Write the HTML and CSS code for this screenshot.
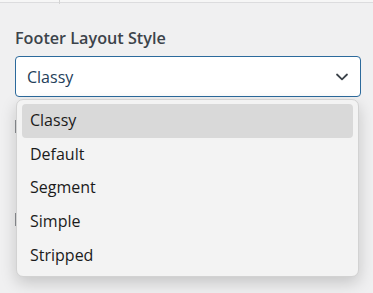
FILE: index.html
```html
<!DOCTYPE html>
<html lang="en">
<head>
    <meta charset="UTF-8">
    <meta name="viewport" content="width=device-width, initial-scale=1.0">
    <title>Footer Layout Style</title>
    <link rel="stylesheet" href="styles.css">
</head>
<body>
    <div class="topbar"><span class="tick"></span></div>
    <div class="panel">
        <label class="label" for="footer-style">Footer Layout Style</label>
        <div class="select-wrap">
            <div class="select" id="footer-style">
                <span class="select-value">Classy</span>
                <svg class="chevron" width="14" height="8" viewBox="0 0 14 8">
                    <path d="M2 1.5 L7 6.3 L12 1.5" fill="none" stroke="#3c434a" stroke-width="1.8" stroke-linecap="round" stroke-linejoin="round"/>
                </svg>
            </div>
            <ul class="options">
                <li class="option active">Classy</li>
                <li class="option">Default</li>
                <li class="option">Segment</li>
                <li class="option">Simple</li>
                <li class="option">Stripped</li>
            </ul>
        </div>
        <div class="field-under"></div>
        <div class="field-under second"></div>
    </div>
</body>
</html>
```

FILE: styles.css
```css
body {
    margin: 0;
    font-family: "Open Sans", "Noto Sans", sans-serif;
    background-color: #f0f0f1;
    height: 293px;
    overflow: hidden;
}
.topbar {
    height: 2px;
    background-color: #f6f6f6;
    border-bottom: 1px solid #dcdcde;
    position: relative;
}
.tick {
    position: absolute;
    left: 59px;
    top: 0;
    width: 1px;
    height: 4px;
    background-color: #d4d4d4;
}
.panel {
    padding: 25px 12px 0 15px;
}
.label {
    display: block;
    font-size: 16.2px;
    font-weight: 600;
    color: #3c434a;
    line-height: 20px;
    margin-bottom: 8px;
}
.select-wrap {
    position: relative;
}
.select {
    height: 39px;
    border: 1px solid #2c6a9c;
    border-radius: 4px;
    background-color: #ffffff;
    display: flex;
    align-items: center;
    justify-content: space-between;
    padding: 0 11px 0 11px;
}
.select-value {
    font-size: 16px;
    color: #24405a;
}
.chevron {
    margin-top: 1px;
}
.options {
    position: absolute;
    top: 43px;
    left: 1px;
    right: 2px;
    margin: 0;
    padding: 4px 5px;
    list-style: none;
    background-color: #f3f3f3;
    border: 1px solid #d2d2d2;
    border-radius: 7px;
    box-shadow: 0 6px 16px rgba(0, 0, 0, 0.18);
    z-index: 2;
}
.option {
    height: 33.7px;
    line-height: 33.7px;
    padding-left: 8px;
    font-size: 16px;
    color: #1b1b1b;
    border-radius: 4px;
}
.option.active {
    background-color: #d9d9d9;
}
.field-under {
    height: 13px;
    margin-top: 23px;
    border-left: 1px solid #8c8f94;
    width: 20px;
}
.field-under.second {
    margin-top: 80px;
}
```
